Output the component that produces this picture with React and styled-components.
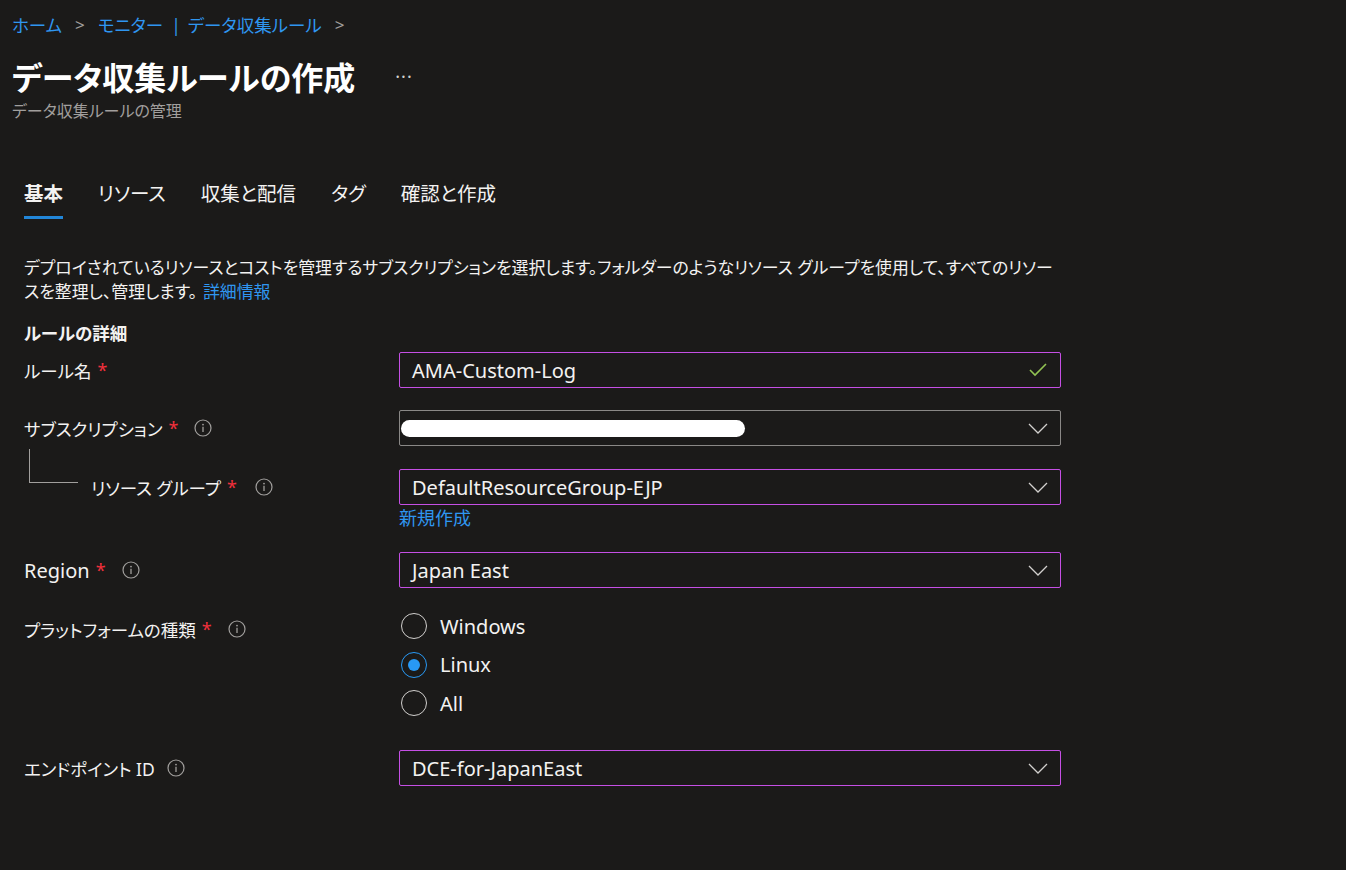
import React from "react";
import styled, { createGlobalStyle } from "styled-components";

const GlobalStyle = createGlobalStyle`
  html, body {
    margin: 0;
    padding: 0;
    background: #1b1a19;
  }
  body {
    font-family: "Noto Sans", "Noto Sans CJK JP", sans-serif;
    color: #f3f2f1;
    font-feature-settings: "palt";
  }
`;

const Page = styled.div`
  width: 1346px;
  height: 870px;
  background: #1b1a19;
  overflow: hidden;
`;

const Header = styled.div`
  padding: 10px 12px 0;
`;

const Breadcrumb = styled.div`
  display: flex;
  align-items: center;
  gap: 13px;
  font-size: 17.5px;
  height: 28px;
`;

const Crumb = styled.a`
  color: #2f96f0;
  text-decoration: none;
`;

const Pipe = styled.span`
  margin: 0 7px 0 8px;
`;

const CrumbSep = styled.span`
  color: #a19f9d;
  font-size: 17px;
`;

const TitleRow = styled.div`
  display: flex;
  align-items: center;
  gap: 40px;
  margin-top: 17px;
  height: 42px;
`;

const Title = styled.h1`
  margin: 0;
  font-size: 32px;
  font-weight: 700;
  color: #ffffff;
`;

const More = styled.span`
  color: #d2d0ce;
  font-size: 18px;
  letter-spacing: 1px;
`;

const Subtitle = styled.div`
  font-size: 16px;
  color: #a19f9d;
  margin-top: 2px;
  height: 24px;
  line-height: 24px;
`;

const Body = styled.div`
  padding: 0 24px;
`;

const Tabs = styled.div`
  display: flex;
  gap: 35px;
  margin-top: 58px;
`;

const Tab = styled.div`
  font-size: 19.5px;
  font-weight: ${(p) => (p.active ? 700 : 400)};
  color: #f3f2f1;
  padding-bottom: 9px;
  height: 26px;
  line-height: 26px;
  border-bottom: 3px solid ${(p) => (p.active ? "#2286d8" : "transparent")};
`;

const Description = styled.p`
  width: 1060px;
  margin: 37px 0 0;
  font-size: 16.9px;
  line-height: 24px;
  color: #f3f2f1;
`;

const Link = styled.a`
  color: #2f96f0;
  text-decoration: none;
  margin-left: 6px;
`;

const SectionTitle = styled.h2`
  margin: 16px 0 6px;
  font-size: 17.5px;
  font-weight: 700;
  line-height: 26px;
  color: #f3f2f1;
`;

const Row = styled.div`
  display: flex;
  align-items: ${(p) => (p.top ? "flex-start" : "center")};
  margin-bottom: ${(p) => p.gap ?? 22}px;
`;

const LabelCell = styled.div`
  width: 375px;
  flex-shrink: 0;
  display: flex;
  align-items: center;
  font-size: ${(p) => (p.latin ? 20 : 17.5)}px;
  height: 36px;
  box-sizing: border-box;
  margin-top: ${(p) => p.offset || 0}px;
`;

const Star = styled.span`
  color: #f1303c;
  margin-left: 6px;
  font-size: 18px;
`;

const InfoWrap = styled.span`
  display: inline-flex;
  margin-left: ${(p) => p.space || 16}px;
`;

const Connector = styled.span`
  align-self: flex-start;
  width: 49px;
  height: 34px;
  margin-top: -20px;
  margin-left: 5px;
  margin-right: 13px;
  border-left: 1px solid #a19f9d;
  border-bottom: 1px solid #a19f9d;
  box-sizing: border-box;
`;

const Field = styled.div`
  width: 662px;
`;

const Box = styled.div`
  height: 36px;
  box-sizing: border-box;
  border: 1px solid ${(p) => (p.muted ? "#8a8886" : "#c54fe4")};
  border-radius: 2px;
  display: flex;
  align-items: center;
  padding: 0 12px;
  font-size: 20px;
  color: #f3f2f1;
`;

const Value = styled.span`
  flex: 1;
`;

const Redacted = styled.span`
  display: block;
  width: 344px;
  height: 17px;
  margin-left: -11px;
  margin-top: 1px;
  background: #ffffff;
  border-radius: 9px;
`;

const SubLink = styled.div`
  margin-top: 1px;
  font-size: 18px;
  line-height: 24px;
  color: #2f96f0;
`;

const RadioGroup = styled.div`
  display: flex;
  flex-direction: column;
  margin-top: ${(p) => p.offset || 0}px;
`;

const RadioItem = styled.label`
  display: flex;
  align-items: center;
  height: 38.5px;
  gap: 13px;
  font-size: 20px;
  color: #f3f2f1;
`;

const RadioCircle = styled.span`
  width: 26px;
  height: 26px;
  margin-left: 2px;
  border-radius: 50%;
  box-sizing: border-box;
  border: 1.5px solid ${(p) => (p.checked ? "#2899f5" : "#d2d0ce")};
  display: flex;
  align-items: center;
  justify-content: center;
  &::after {
    content: "";
    width: 12px;
    height: 12px;
    border-radius: 50%;
    background: ${(p) => (p.checked ? "#2899f5" : "transparent")};
  }
`;

const InfoIcon = () => (
  <svg width="18" height="18" viewBox="0 0 18 18">
    <circle cx="9" cy="9" r="8" fill="none" stroke="#a19f9d" strokeWidth="1.2" />
    <circle cx="9" cy="5.6" r="0.9" fill="#a19f9d" />
    <line x1="9" y1="7.8" x2="9" y2="13" stroke="#a19f9d" strokeWidth="1.3" />
  </svg>
);

const Chevron = () => (
  <svg width="20" height="11" viewBox="0 0 20 11">
    <polyline points="1,1 10,10 19,1" fill="none" stroke="#d2d0ce" strokeWidth="1.3" />
  </svg>
);

const Check = () => (
  <svg width="20" height="16" viewBox="0 0 20 16">
    <polyline points="2,8 7,13 18,2" fill="none" stroke="#92c353" strokeWidth="1.6" />
  </svg>
);

const Label = ({ text, required, info, space }) => (
  <>
    <span>{text}</span>
    {required && <Star>*</Star>}
    {info && (
      <InfoWrap space={space}>
        <InfoIcon />
      </InfoWrap>
    )}
  </>
);

const tabs = ["基本", "リソース", "収集と配信", "タグ", "確認と作成"];

export default function App() {
  return (
    <Page>
      <GlobalStyle />
      <Header>
        <Breadcrumb>
          <Crumb>ホーム</Crumb>
          <CrumbSep>&gt;</CrumbSep>
          <Crumb>
            モニター<Pipe>|</Pipe>データ収集ルール
          </Crumb>
          <CrumbSep>&gt;</CrumbSep>
        </Breadcrumb>
        <TitleRow>
          <Title>データ収集ルールの作成</Title>
          <More>···</More>
        </TitleRow>
        <Subtitle>データ収集ルールの管理</Subtitle>
      </Header>
      <Body>
        <Tabs>
          {tabs.map((t, i) => (
            <Tab key={t} active={i === 0}>
              {t}
            </Tab>
          ))}
        </Tabs>
        <Description>
          デプロイされているリソースとコストを管理するサブスクリプションを選択します。フォルダーのようなリソース
          グループを使用して、すべてのリソー
          <br />
          スを整理し、管理します。<Link>詳細情報</Link>
        </Description>
        <SectionTitle>ルールの詳細</SectionTitle>

        <Row>
          <LabelCell>
            <Label text="ルール名" required />
          </LabelCell>
          <Field>
            <Box>
              <Value>AMA-Custom-Log</Value>
              <Check />
            </Box>
          </Field>
        </Row>

        <Row gap={23}>
          <LabelCell>
            <Label text="サブスクリプション" required info space={16} />
          </LabelCell>
          <Field>
            <Box muted>
              <Value>
                <Redacted />
              </Value>
              <Chevron />
            </Box>
          </Field>
        </Row>

        <Row top gap={22}>
          <LabelCell>
            <Connector />
            <Label text="リソース グループ" required info space={18} />
          </LabelCell>
          <Field>
            <Box>
              <Value>DefaultResourceGroup-EJP</Value>
              <Chevron />
            </Box>
            <SubLink>新規作成</SubLink>
          </Field>
        </Row>

        <Row gap={22}>
          <LabelCell latin>
            <Label text="Region" required info space={16} />
          </LabelCell>
          <Field>
            <Box>
              <Value>Japan East</Value>
              <Chevron />
            </Box>
          </Field>
        </Row>

        <Row top gap={27.5}>
          <LabelCell offset={1}>
            <Label text="プラットフォームの種類" required info space={16} />
          </LabelCell>
          <Field>
            <RadioGroup offset={-3}>
              {["Windows", "Linux", "All"].map((o) => (
                <RadioItem key={o}>
                  <RadioCircle checked={o === "Linux"} />
                  {o}
                </RadioItem>
              ))}
            </RadioGroup>
          </Field>
        </Row>

        <Row>
          <LabelCell>
            <Label text="エンドポイント ID" info space={12} />
          </LabelCell>
          <Field>
            <Box>
              <Value>DCE-for-JapanEast</Value>
              <Chevron />
            </Box>
          </Field>
        </Row>
      </Body>
    </Page>
  );
}
